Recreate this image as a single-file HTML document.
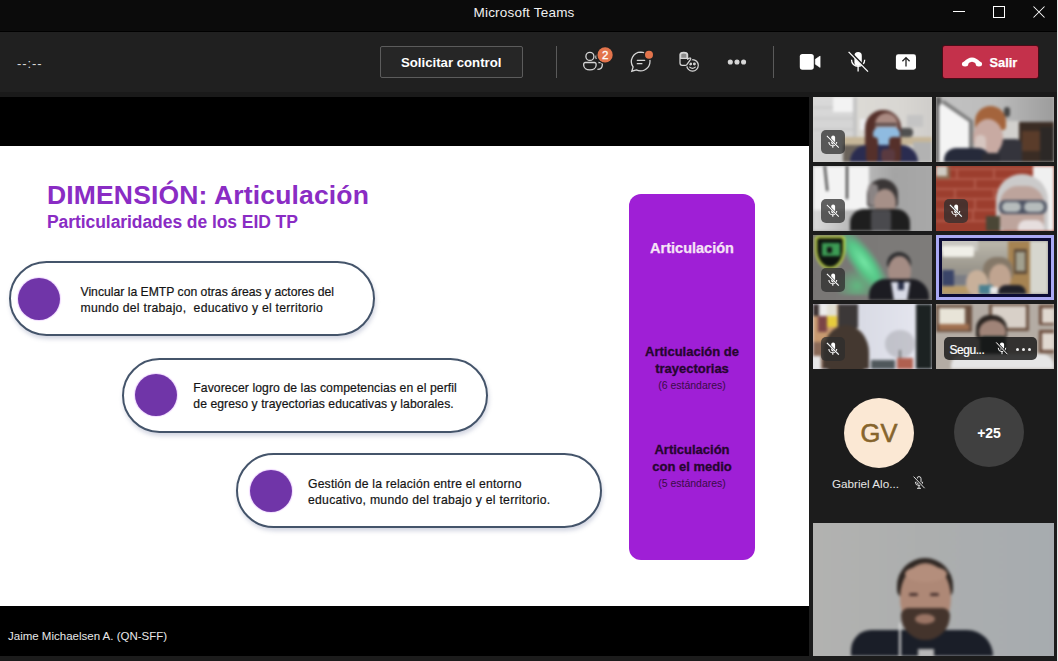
<!DOCTYPE html>
<html><head><meta charset="utf-8">
<style>
*{margin:0;padding:0;box-sizing:border-box}
html,body{width:1058px;height:661px;overflow:hidden;background:#0b0b0b;font-family:"Liberation Sans",sans-serif}
.a{position:absolute}
.t{position:absolute;white-space:nowrap;line-height:1}
#title{left:0;top:0;width:1058px;height:31px;background:#0b0b0b}
#tb{left:0;top:32px;width:1057px;height:60px;background:#202020}
#tb2{left:0;top:92px;width:1057px;height:5px;background:#1a1a1a}
#stage{left:0;top:97px;width:809px;height:559px;background:#000}
#slide{left:0;top:146px;width:809px;height:460px;background:#fff;overflow:hidden}
#panel{left:809px;top:97px;width:248px;height:559px;background:#1c1c1c}
#bot{left:0;top:656px;width:1058px;height:5px;background:#1c1c1c}
#rb{left:1057px;top:0;width:1px;height:661px;background:#e8e8e8}
.pill{position:absolute;width:366px;height:75px;border:2px solid #44546a;border-radius:38px;background:#fff;box-shadow:1px 3px 4px rgba(80,90,140,.25)}
.dot{position:absolute;width:42px;height:42px;border-radius:50%;background:#7035a8;box-shadow:0 0 1px 1px #f0d8ff}
.ptx{position:absolute;font-size:12.2px;line-height:16px;color:#141414;white-space:nowrap;-webkit-text-stroke:0.2px #141414}
.tile{position:absolute;overflow:hidden;background:#777}
.mute{position:absolute;width:24px;height:24px;border-radius:5px;background:rgba(40,40,40,.75)}
.v{position:absolute;left:-4px;top:-4px;right:-4px;bottom:-4px;filter:blur(1.6px)}
.v>div{position:absolute}
.mute svg{position:absolute;left:0;top:0}
</style></head><body>
<div class="a" id="title"></div>
<div class="t" style="left:473.5px;top:5.6px;font-size:13.5px;letter-spacing:0.2px;color:#f0f0f0">Microsoft Teams</div>
<div class="a" style="left:953px;top:11px;width:12px;height:1px;background:#fff"></div>
<div class="a" style="left:993px;top:6px;width:12px;height:12px;border:1px solid #fff"></div>
<svg class="a" style="left:1032px;top:5px" width="14" height="14"><path d="M1.5 1.5L12.5 12.5M12.5 1.5L1.5 12.5" stroke="#fff" stroke-width="1.05"/></svg>

<div class="a" id="tb"></div>
<div class="a" id="tb2"></div>
<div class="a" style="left:0;top:31px;width:1057px;height:1px;background:#000"></div><div class="t" style="left:17px;top:56.5px;font-size:13px;letter-spacing:0.9px;color:#d8d8d8">--:--</div>
<div class="a" style="left:380px;top:46px;width:143px;height:32px;border:1px solid #5c5c5c;border-radius:2px;background:#262626"></div>
<div class="t" style="left:401px;top:56px;font-size:13.2px;font-weight:700;color:#fff">Solicitar control</div>
<div class="a" style="left:556px;top:46px;width:1px;height:32px;background:#5a5a5a"></div>
<div class="a" style="left:773px;top:46px;width:1px;height:32px;background:#5a5a5a"></div>
<div class="a" style="left:943px;top:46px;width:95px;height:32px;border-radius:2px;background:#c4314b;box-shadow:0 0 0 1px #4a0c18"></div>
<div class="t" style="left:989.5px;top:57px;font-size:12.8px;font-weight:700;color:#fff;-webkit-text-stroke:0.25px #fff">Salir</div>

<svg class="a" style="left:570px;top:40px" width="200" height="44" viewBox="570 40 200 44">
<g fill="none" stroke="#d6d6d6" stroke-width="1.3">
<circle cx="589.9" cy="56.4" r="4"/>
<path d="M585.3 62.5h9.2a1.6 1.6 0 0 1 1.6 1.6v1.2c0 2.8-2.9 4.6-6.2 4.6s-6.2-1.8-6.2-4.6v-1.2a1.6 1.6 0 0 1 1.6-1.6z"/>
<path d="M598.4 62.5h2.3a1.6 1.6 0 0 1 1.6 1.6v1c0 2.4-1.9 4.3-4.9 4.3"/>
<path d="M596.4 58.9a2.8 2.8 0 0 1 1.6-4.4"/>
</g>
<circle cx="605.1" cy="54.9" r="9" fill="#202020"/>
<circle cx="605.1" cy="54.9" r="7.6" fill="#e3744c"/>
<text x="605.1" y="59" font-family="Liberation Sans" font-size="11.5" fill="#fff" text-anchor="middle" stroke="#fff" stroke-width="0.3">2</text>
<g fill="none" stroke="#d6d6d6" stroke-width="1.3">
<path d="M640.7 52.1a9.4 9.4 0 1 1-4.3 17.8l-4.6 1.3 1.3-4.3a9.4 9.4 0 0 1 7.6-14.8z"/>
<path d="M637.3 60.3h7.4M637.3 63.7h4.6" stroke-linecap="round"/>
</g>
<circle cx="649" cy="54.7" r="5.4" fill="#202020"/>
<circle cx="649" cy="54.7" r="4" fill="#e3744c"/>
<g fill="none" stroke="#d6d6d6" stroke-width="1.3" stroke-linejoin="round">
<g fill="none" stroke="#d6d6d6" stroke-width="1.25">
<circle cx="692.5" cy="65.3" r="5.8"/>
<path d="M689.7 67.1Q692.5 69.5 695.3 67.1" stroke-linecap="round"/>
</g>
<circle cx="690.6" cy="64" r="0.8" fill="#d6d6d6"/><circle cx="694.4" cy="64" r="0.8" fill="#d6d6d6"/>
<path d="M682.2 65.4C680.8 65.4 680 64.4 680 63V54.6C680 52.9 681.6 52.3 683.8 52.3C686 52.3 687.6 52.9 687.6 54.6V59.3L689 58.3C689.9 57.7 691.2 58.2 690.6 59.3L686.8 64.6C686.4 65.1 685.8 65.4 685.1 65.4Z" fill="#202020" stroke="#202020" stroke-width="3.2" stroke-linejoin="round"/>
<path d="M680.6 58.4V54.6C680.6 53.3 682 52.9 683.8 52.9C685.6 52.9 687 53.3 687 54.6V58.4Z" fill="#8e8e8e"/>
<path d="M682.2 65.4C680.8 65.4 680 64.4 680 63V54.6C680 52.9 681.6 52.3 683.8 52.3C686 52.3 687.6 52.9 687.6 54.6V59.3L689 58.3C689.9 57.7 691.2 58.2 690.6 59.3L686.8 64.6C686.4 65.1 685.8 65.4 685.1 65.4Z" fill="none" stroke="#d6d6d6" stroke-width="1.25" stroke-linejoin="round"/>
<circle cx="730.3" cy="62" r="1.9" fill="#dadada"/>
<circle cx="737" cy="62" r="1.9" fill="#dadada"/>
<circle cx="743.6" cy="62" r="1.9" fill="#dadada"/>
</svg>
<svg class="a" style="left:790px;top:40px" width="210" height="44" viewBox="790 40 210 44">
<rect x="799.8" y="53.9" width="14" height="15.8" rx="2.6" fill="#fff"/>
<path d="M815.3 59.3l4.8-3.2v11.3l-4.8-3.2z" fill="#fff" stroke="#fff" stroke-width="0.6" stroke-linejoin="round"/>
<rect x="854.4" y="52" width="7.4" height="13.9" rx="3.7" fill="#fff"/>
<path d="M851.5 59.8a6.6 6.6 0 0 0 13.2 0" fill="none" stroke="#fff" stroke-width="1.3"/>
<path d="M858.1 66.5v5" stroke="#fff" stroke-width="1.3"/>
<path d="M849.6 51.5l19.4 19.7" stroke="#202020" stroke-width="2.2"/>
<path d="M848.6 51.9l19.4 19.7" stroke="#fff" stroke-width="1.3"/>
<rect x="895.9" y="54.3" width="20.1" height="15.4" rx="2.4" fill="#fff"/>
<path d="M906 66.6v-8.8M902.4 61.2l3.6-3.6 3.6 3.6" fill="none" stroke="#222" stroke-width="1.3"/>
<path d="M965.4 63.4Q972 55.8 978.6 63.4" fill="none" stroke="#fff" stroke-width="4.4" stroke-linecap="round"/><ellipse cx="965.1" cy="63.9" rx="3.2" ry="2.5" fill="#fff"/><ellipse cx="978.9" cy="63.9" rx="3.2" ry="2.5" fill="#fff"/>
</svg>
<div class="a" id="stage"></div>
<div class="a" id="slide">
<div class="t" style="left:47px;top:36.4px;font-size:26.5px;letter-spacing:0.15px;font-weight:700;color:#8a2cc4">DIMENSIÓN: Articulación</div>
<div class="t" style="left:47px;top:68.1px;font-size:17.5px;letter-spacing:-0.07px;font-weight:700;color:#8a2cc4">Particularidades de los EID TP</div>
<div class="pill" style="left:9px;top:115px"></div>
<div class="pill" style="left:122px;top:211.5px"></div>
<div class="pill" style="left:236px;top:307px"></div>
<div class="dot" style="left:18px;top:132px"></div>
<div class="dot" style="left:135px;top:227.7px"></div>
<div class="dot" style="left:250px;top:324.2px"></div>
<div class="ptx" style="left:80.5px;top:137.5px;letter-spacing:0px">Vincular la EMTP con otras áreas y actores del</div>
<div class="ptx" style="left:80.5px;top:153.7px;letter-spacing:0.27px">mundo del trabajo,&nbsp; educativo y el territorio</div>
<div class="ptx" style="left:193.3px;top:234.0px;letter-spacing:0.085px">Favorecer logro de las competencias en el perfil</div>
<div class="ptx" style="left:193.3px;top:250.2px;letter-spacing:0.064px">de egreso y trayectorias educativas y laborales.</div>
<div class="ptx" style="left:308px;top:329.7px;letter-spacing:0.18px">Gestión de la relación entre el entorno</div>
<div class="ptx" style="left:308px;top:345.9px;letter-spacing:0.27px">educativo, mundo del trabajo y el territorio.</div>
<div class="a" style="left:629px;top:48px;width:126px;height:366px;border-radius:12px;background:#9f1fd6"></div>
<div class="t" style="left:629px;width:126px;text-align:center;top:94.5px;font-size:14.5px;font-weight:700;color:#f6e4f6;-webkit-text-stroke:0.25px #f6e4f6">Articulación</div>
<div class="t" style="left:629px;width:126px;text-align:center;top:198px;font-size:13px;font-weight:700;color:#26062f;line-height:16.8px;-webkit-text-stroke:0.3px #26062f">Articulación de<br>trayectorias</div>
<div class="t" style="left:629px;width:126px;text-align:center;top:234px;font-size:10.5px;color:#3a0c48">(6 estándares)</div>
<div class="t" style="left:629px;width:126px;text-align:center;top:294.8px;font-size:13px;font-weight:700;color:#26062f;line-height:17.6px;-webkit-text-stroke:0.3px #26062f">Articulación<br>con el medio</div>
<div class="t" style="left:629px;width:126px;text-align:center;top:331.6px;font-size:10.5px;color:#3a0c48">(5 estándares)</div>
</div>
<div class="t" style="left:8px;top:631px;font-size:11.5px;color:#e8e8e8">Jaime Michaelsen A. (QN-SFF)</div>

<div class="a" id="panel"></div>
<div class="tile" style="left:813px;top:97px;width:119px;height:65px"><div class="v"><div style="left:0px;top:0px;width:127px;height:73px;background:#d6d4cf"></div><div style="left:4px;top:4px;width:41px;height:65px;background:linear-gradient(180deg,#d9d9d9,#cfcfcf)"></div><div style="left:4px;top:14px;width:41px;height:1px;background:#bdbdbd"></div><div style="left:4px;top:25px;width:41px;height:1px;background:#bdbdbd"></div><div style="left:4px;top:36px;width:41px;height:1px;background:#bdbdbd"></div><div style="left:24px;top:4px;width:20px;height:15px;background:#f3f3f3"></div><div style="left:44px;top:4px;width:4px;height:65px;background:#c4c4c4"></div><div style="left:48px;top:4px;width:75px;height:42px;background:linear-gradient(90deg,#dcdad5,#d8d6d2 60%,#cfcdca)"></div><div style="left:51px;top:26px;width:12px;height:11px;background:#ebebef"></div><div style="left:98px;top:22px;width:16px;height:12px;background:#c4c4c4"></div><div style="left:34px;top:44px;width:89px;height:8px;background:#c6b698"></div><div style="left:34px;top:52px;width:28px;height:17px;background:#6a625a"></div><div style="left:90px;top:35px;width:14px;height:9px;background:#505050;border-radius:4px"></div><div style="left:104px;top:49px;width:19px;height:20px;background:#b2b2b2"></div><div style="left:56px;top:17px;width:36px;height:52px;background:#55302a;border-radius:18px 18px 6px 6px"></div><div style="left:66px;top:20px;width:23px;height:24px;background:#aa8a82;border-radius:50%;"></div><div style="left:66px;top:30px;width:22px;height:3px;background:#5a4a48"></div><div style="left:64px;top:34px;width:27px;height:20px;background:#8fbbe0;border-radius:7px 7px 14px 14px"></div><div style="left:41px;top:52px;width:68px;height:17px;background:#2a2c50;border-radius:18px 18px 0 0"></div><div style="left:57px;top:44px;width:12px;height:25px;background:#55302a;border-radius:4px"></div><div style="left:80px;top:44px;width:12px;height:25px;background:#55302a;border-radius:4px"></div><div style="left:72px;top:56px;width:14px;height:13px;background:#5a3a40;border-radius:4px"></div></div><div class="mute" style="left:8px;top:33px;background:rgba(44,44,44,.74)"><svg width="24" height="24" viewBox="0 0 24 24"><rect x="10.2" y="5.5" width="3.9" height="8.9" rx="1.95" fill="#fff"/><path d="M7.9 11.9a3.9 3.9 0 0 0 7.8 0" fill="none" stroke="#fff" stroke-width="1.1"/><path d="M11.8 15.8v1.9" stroke="#fff" stroke-width="1.1"/><path d="M6.3 5.9l11.6 11.8" stroke="#444" stroke-width="2"/><path d="M5.9 5.9l11.9 11.8" stroke="#fff" stroke-width="1.1"/></svg></div></div><div class="tile" style="left:936px;top:97px;width:118px;height:65px"><div class="v"><div style="left:0px;top:0px;width:126px;height:73px;background:#b8b6b2"></div><div style="left:4px;top:4px;width:118px;height:26px;background:linear-gradient(90deg,#c2c2c2,#bcbcbc 50%,#9c9c9c)"></div><div style="left:66px;top:28px;width:22px;height:30px;background:#d2d0cd"></div><div style="left:4px;top:4px;width:5px;height:65px;background:#5a5a5a"></div><div style="left:7px;top:7px;width:34px;height:62px;background:#7c7c7c;clip-path:polygon(0 8%,14% 0,100% 33%,100% 100%,0 100%)"></div><div style="left:7px;top:10px;width:30px;height:59px;background:#f4f4f4;clip-path:polygon(0 6%,8% 0,100% 32%,100% 100%,0 100%)"></div><div style="left:87px;top:29px;width:35px;height:40px;background:#3a2c24"></div><div style="left:90px;top:38px;width:18px;height:20px;background:#5a3c2a"></div><div style="left:108px;top:34px;width:14px;height:35px;background:#2c2826"></div><div style="left:66px;top:46px;width:24px;height:23px;background:#34343c;border-radius:6px 6px 0 0"></div><div style="left:72px;top:14px;width:6px;height:10px;background:#454545;border-radius:3px"></div><div style="left:43px;top:13px;width:31px;height:24px;background:#a4643c;border-radius:16px 16px 4px 4px"></div><div style="left:41px;top:26px;width:30px;height:37px;background:#c8aaa2;border-radius:50%;"></div><div style="left:43px;top:42px;width:11px;height:20px;background:#d6c6c0;border-radius:5px"></div><div style="left:12px;top:55px;width:46px;height:14px;background:#262a3a;border-radius:12px 12px 0 0"></div><div style="left:50px;top:60px;width:18px;height:9px;background:#2c2c34"></div></div></div><div class="tile" style="left:813px;top:166px;width:119px;height:65px"><div class="v"><div style="left:0px;top:0px;width:127px;height:73px;background:#a9a9a9"></div><div style="left:60px;top:4px;width:63px;height:65px;background:linear-gradient(90deg,#b6b6b6,#a4a4a4 40%,#a8a8a8)"></div><div style="left:4px;top:4px;width:56px;height:44px;background:#f3f3f3"></div><div style="left:4px;top:48px;width:56px;height:21px;background:linear-gradient(90deg,#dadada,#a8a8a8)"></div><div style="left:16px;top:4px;width:2px;height:25px;background:#2a2a2a;transform:skewX(6deg)"></div><div style="left:37px;top:4px;width:2px;height:33px;background:#2a2a2a"></div><div style="left:58px;top:17px;width:31px;height:28px;background:#3a3636;border-radius:16px 16px 4px 4px"></div><div style="left:59px;top:22px;width:10px;height:22px;background:#8a8484;border-radius:4px"></div><div style="left:65px;top:27px;width:22px;height:27px;background:#a69088;border-radius:50%;"></div><div style="left:41px;top:47px;width:60px;height:22px;background:#1e1e1e;border-radius:14px 14px 0 0"></div><div style="left:62px;top:48px;width:20px;height:21px;background:#4a4a4e;border-radius:3px"></div></div><div class="mute" style="left:8px;top:33px;background:rgba(44,44,44,.74)"><svg width="24" height="24" viewBox="0 0 24 24"><rect x="10.2" y="5.5" width="3.9" height="8.9" rx="1.95" fill="#fff"/><path d="M7.9 11.9a3.9 3.9 0 0 0 7.8 0" fill="none" stroke="#fff" stroke-width="1.1"/><path d="M11.8 15.8v1.9" stroke="#fff" stroke-width="1.1"/><path d="M6.3 5.9l11.6 11.8" stroke="#444" stroke-width="2"/><path d="M5.9 5.9l11.9 11.8" stroke="#fff" stroke-width="1.1"/></svg></div></div><div class="tile" style="left:936px;top:166px;width:118px;height:65px"><div class="v"><div style="left:0px;top:0px;width:126px;height:73px;background:#9c3e2e"></div><div style="left:4px;top:6px;width:100px;height:1.5px;background:#b25a4a"></div><div style="left:4px;top:16px;width:100px;height:1.5px;background:#b25a4a"></div><div style="left:4px;top:26px;width:100px;height:1.5px;background:#b25a4a"></div><div style="left:4px;top:36px;width:100px;height:1.5px;background:#b25a4a"></div><div style="left:4px;top:47px;width:100px;height:1.5px;background:#b25a4a"></div><div style="left:4px;top:58px;width:100px;height:1.5px;background:#b25a4a"></div><div style="left:24px;top:6px;width:1.5px;height:10px;background:#b25a4a"></div><div style="left:61px;top:6px;width:1.5px;height:10px;background:#b25a4a"></div><div style="left:42px;top:16px;width:1.5px;height:10px;background:#b25a4a"></div><div style="left:22px;top:26px;width:1.5px;height:10px;background:#b25a4a"></div><div style="left:61px;top:26px;width:1.5px;height:10px;background:#b25a4a"></div><div style="left:42px;top:36px;width:1.5px;height:11px;background:#b25a4a"></div><div style="left:40px;top:47px;width:1.5px;height:11px;background:#b25a4a"></div><div style="left:4px;top:4px;width:14px;height:13px;background:#8a6a50"></div><div style="left:4px;top:4px;width:11px;height:10px;background:#d0ccc4"></div><div style="left:101px;top:4px;width:21px;height:65px;background:#f0f0f0"></div><div style="left:64px;top:12px;width:52px;height:57px;background:#cbcaca;border-radius:26px 26px 0 0"></div><div style="left:68px;top:24px;width:44px;height:45px;background:#bda49c;border-radius:18px 18px 6px 6px"></div><div style="left:67px;top:38px;width:48px;height:14px;background:#4c5262;border-radius:6px"></div><div style="left:70px;top:40px;width:19px;height:10px;background:#b6bcbc;border-radius:5px"></div><div style="left:92px;top:40px;width:20px;height:10px;background:#b6bcbc;border-radius:5px"></div><div style="left:86px;top:58px;width:26px;height:11px;background:#e6dede;border-radius:8px 8px 0 0"></div><div style="left:54px;top:54px;width:14px;height:15px;background:#4a4636"></div></div><div class="mute" style="left:8px;top:33px;background:rgba(44,44,44,.74)"><svg width="24" height="24" viewBox="0 0 24 24"><rect x="10.2" y="5.5" width="3.9" height="8.9" rx="1.95" fill="#fff"/><path d="M7.9 11.9a3.9 3.9 0 0 0 7.8 0" fill="none" stroke="#fff" stroke-width="1.1"/><path d="M11.8 15.8v1.9" stroke="#fff" stroke-width="1.1"/><path d="M6.3 5.9l11.6 11.8" stroke="#444" stroke-width="2"/><path d="M5.9 5.9l11.9 11.8" stroke="#fff" stroke-width="1.1"/></svg></div></div><div class="tile" style="left:813px;top:235px;width:119px;height:65px"><div class="v"><div style="left:0px;top:0px;width:127px;height:73px;background:linear-gradient(90deg,#787674,#7e7c7a)"></div><div style="left:44px;top:-4px;width:26px;height:76px;background:radial-gradient(ellipse at 50% 45%,#74e6a4 0%,#56c888 35%,rgba(120,118,116,0) 72%);transform:rotate(-36deg)"></div><div style="left:24px;top:34px;width:40px;height:30px;background:radial-gradient(ellipse at 60% 70%,rgba(90,200,130,.8) 0%,rgba(120,118,116,0) 65%)"></div><div style="left:6px;top:5px;width:30px;height:33px;background:#c8e040;border-radius:3px 3px 15px 15px / 3px 3px 20px 20px"></div><div style="left:8px;top:7px;width:26px;height:29px;background:#0e1410;border-radius:2px 2px 13px 13px / 2px 2px 18px 18px"></div><div style="left:13px;top:12px;width:18px;height:13px;background:#3c9c54"></div><div style="left:18px;top:16px;width:5px;height:6px;background:#111"></div><div style="left:78px;top:21px;width:24px;height:16px;background:#2c2c2e;border-radius:12px 12px 4px 4px"></div><div style="left:79px;top:25px;width:23px;height:30px;background:#a48c84;border-radius:50%;"></div><div style="left:60px;top:48px;width:60px;height:21px;background:#1c1c22;border-radius:16px 18px 0 0"></div><div style="left:82px;top:51px;width:19px;height:18px;background:#d8dae6;clip-path:polygon(0 0,100% 0,85% 100%,15% 100%)"></div><div style="left:89px;top:51px;width:6px;height:8px;background:#2a3048"></div></div><div class="mute" style="left:8px;top:33px;background:rgba(44,44,44,.74)"><svg width="24" height="24" viewBox="0 0 24 24"><rect x="10.2" y="5.5" width="3.9" height="8.9" rx="1.95" fill="#fff"/><path d="M7.9 11.9a3.9 3.9 0 0 0 7.8 0" fill="none" stroke="#fff" stroke-width="1.1"/><path d="M11.8 15.8v1.9" stroke="#fff" stroke-width="1.1"/><path d="M6.3 5.9l11.6 11.8" stroke="#444" stroke-width="2"/><path d="M5.9 5.9l11.9 11.8" stroke="#fff" stroke-width="1.1"/></svg></div></div><div class="a" style="left:936px;top:235px;width:118px;height:65px;background:#0c0c34;border:3px solid #aaa9f4"></div><div class="tile" style="left:942px;top:241px;width:106px;height:53px"><div class="v"><div style="left:0px;top:0px;width:114px;height:61px;background:#96938c"></div><div style="left:4px;top:4px;width:70px;height:28px;background:linear-gradient(180deg,#bcb8ac,#9a968c)"></div><div style="left:0px;top:0px;width:40px;height:14px;background:#c8c6c0"></div><div style="left:4px;top:9px;width:32px;height:11px;background:#f0efe8;border-radius:2px"></div><div style="left:4px;top:33px;width:12px;height:16px;background:#3a4468"></div><div style="left:16px;top:38px;width:20px;height:10px;background:#7a7c84"></div><div style="left:4px;top:49px;width:42px;height:8px;background:#b89a68"></div><div style="left:70px;top:4px;width:23px;height:53px;background:#a68352"></div><div style="left:76px;top:12px;width:13px;height:25px;background:#5c4a38"></div><div style="left:78px;top:15px;width:9px;height:19px;background:#a2a08e"></div><div style="left:92px;top:4px;width:18px;height:53px;background:#d6d6ce"></div><div style="left:45px;top:20px;width:30px;height:22px;background:#857868;border-radius:13px 13px 4px 4px"></div><div style="left:51px;top:27px;width:22px;height:28px;background:#c0a490;border-radius:50%;"></div><div style="left:28px;top:33px;width:22px;height:26px;background:#c8b09a;border-radius:50%;"></div><div style="left:41px;top:48px;width:14px;height:9px;background:#4a8090"></div><div style="left:52px;top:50px;width:8px;height:7px;background:#e8e8e8"></div><div style="left:60px;top:48px;width:28px;height:9px;background:#202028;border-radius:8px 8px 0 0"></div></div></div><div class="tile" style="left:813px;top:304px;width:119px;height:65px"><div class="v"><div style="left:0px;top:0px;width:127px;height:73px;background:#dcdde8"></div><div style="left:49px;top:4px;width:58px;height:65px;background:linear-gradient(90deg,#d8dae4,#e4e5ee)"></div><div style="left:4px;top:4px;width:25px;height:65px;background:#c89a70"></div><div style="left:4px;top:4px;width:6px;height:12px;background:#3a3030"></div><div style="left:10px;top:4px;width:8px;height:12px;background:#ececec"></div><div style="left:18px;top:4px;width:10px;height:12px;background:#e2e0d4"></div><div style="left:18px;top:16px;width:10px;height:11px;background:#e6cc3c"></div><div style="left:9px;top:16px;width:9px;height:16px;background:#7a4446"></div><div style="left:4px;top:42px;width:25px;height:27px;background:#8a6a58"></div><div style="left:4px;top:56px;width:8px;height:13px;background:#e8e8e8"></div><div style="left:29px;top:4px;width:20px;height:32px;background:#3c3838"></div><div style="left:45px;top:28px;width:6px;height:8px;background:#f2f2f2"></div><div style="left:107px;top:4px;width:16px;height:65px;background:#1c2222"></div><div style="left:14px;top:25px;width:46px;height:56px;background:#443830;border-radius:50%;"></div><div style="left:14px;top:54px;width:46px;height:15px;background:#443830"></div><div style="left:76px;top:30px;width:30px;height:28px;background:#8a8a90;border-radius:50%;opacity:.35"></div><div style="left:90px;top:50px;width:2px;height:8px;background:#777"></div><div style="left:88px;top:58px;width:16px;height:11px;background:#b06050"></div><div style="left:62px;top:60px;width:24px;height:9px;background:#50585c"></div></div><div class="mute" style="left:8px;top:33px;background:rgba(44,44,44,.74)"><svg width="24" height="24" viewBox="0 0 24 24"><rect x="10.2" y="5.5" width="3.9" height="8.9" rx="1.95" fill="#fff"/><path d="M7.9 11.9a3.9 3.9 0 0 0 7.8 0" fill="none" stroke="#fff" stroke-width="1.1"/><path d="M11.8 15.8v1.9" stroke="#fff" stroke-width="1.1"/><path d="M6.3 5.9l11.6 11.8" stroke="#444" stroke-width="2"/><path d="M5.9 5.9l11.9 11.8" stroke="#fff" stroke-width="1.1"/></svg></div></div><div class="tile" style="left:936px;top:304px;width:118px;height:65px"><div class="v"><div style="left:0px;top:0px;width:126px;height:73px;background:#b4aca4"></div><div style="left:4px;top:5px;width:36px;height:27px;background:#6a5040"></div><div style="left:7px;top:8px;width:26px;height:16px;background:#e8e4d8"></div><div style="left:7px;top:24px;width:30px;height:6px;background:#a07050"></div><div style="left:57px;top:4px;width:40px;height:27px;background:#6a5040"></div><div style="left:60px;top:6px;width:34px;height:22px;background:#d8d0c8"></div><div style="left:107px;top:5px;width:15px;height:20px;background:#6a4a3a"></div><div style="left:110px;top:8px;width:12px;height:15px;background:#e0d8d0"></div><div style="left:107px;top:30px;width:15px;height:23px;background:#6a4a3a"></div><div style="left:110px;top:33px;width:12px;height:17px;background:#e0d8d0"></div><div style="left:44px;top:15px;width:31px;height:24px;background:#2a2420;border-radius:14px 14px 4px 4px"></div><div style="left:47px;top:20px;width:27px;height:24px;background:#a08478;border-radius:50%;"></div><div style="left:48px;top:36px;width:26px;height:23px;background:#1e2a28;border-radius:4px 4px 10px 10px"></div><div style="left:19px;top:54px;width:103px;height:15px;background:#e6e6e6;border-radius:12px 12px 0 0"></div></div><div class="a" style="left:8px;top:33px;width:93px;height:23px;border-radius:5px;background:rgba(22,22,22,.82)"></div><div class="t" style="left:13.5px;top:39.8px;font-size:12px;letter-spacing:-0.45px;color:#fff;-webkit-text-stroke:0.2px #fff">Segu...</div><svg class="a" style="left:58px;top:37px" width="16" height="16" viewBox="4 4 16 16"><rect x="9.9" y="5.5" width="4.2" height="7.6" rx="2.1" fill="#fff"/><path d="M8.2 10.8a3.8 3.8 0 0 0 7.6 0" fill="none" stroke="#fff" stroke-width="1"/><path d="M12 14.6v2.6" stroke="#fff" stroke-width="1"/><path d="M6.4 5.6l11 11.6" stroke="#222" stroke-width="2.4"/><path d="M6.2 5.4l11.2 11.8" stroke="#fff" stroke-width="1"/></svg><div class="a" style="left:80px;top:44px;width:3px;height:3px;border-radius:50%;background:#eee"></div><div class="a" style="left:86px;top:44px;width:3px;height:3px;border-radius:50%;background:#eee"></div><div class="a" style="left:92px;top:44px;width:3px;height:3px;border-radius:50%;background:#eee"></div></div><div class="a" style="left:844px;top:398px;width:70px;height:70px;border-radius:50%;background:#fbe8d4"></div><div class="t" style="left:844px;width:70px;text-align:center;top:421px;font-size:25.5px;color:#86642c;-webkit-text-stroke:0.6px #86642c">GV</div><div class="a" style="left:954px;top:397px;width:70px;height:70px;border-radius:50%;background:#404040"></div><div class="t" style="left:954px;width:70px;text-align:center;top:426px;font-size:14px;font-weight:700;color:#fff">+25</div><div class="t" style="left:832px;top:477.5px;font-size:11.7px;color:#e6e6e6">Gabriel Alo...</div><svg class="a" style="left:911px;top:475px" width="16" height="16" viewBox="4 4 16 16"><rect x="10" y="5.6" width="4" height="7.4" rx="2" fill="none" stroke="#e0e0e0" stroke-width="1"/><path d="M8.3 10.8a3.7 3.7 0 0 0 7.4 0" fill="none" stroke="#e0e0e0" stroke-width="1"/><path d="M12 14.5v2.8M10 17.3h4" stroke="#e0e0e0" stroke-width="1"/><path d="M6.8 5.8l10.8 11.4" stroke="#1c1c1c" stroke-width="2.4"/><path d="M6.6 5.6l11 11.6" stroke="#e0e0e0" stroke-width="1"/></svg><div class="tile" style="left:813px;top:523px;width:241px;height:133px"><div class="v"><div style="left:0px;top:0px;width:249px;height:141px;background:linear-gradient(90deg,#b2b2b0 0%,#acaeae 45%,#a6abaf 100%)"></div><div style="left:42px;top:111px;width:142px;height:26px;background:#1a1e28;border-radius:28px 36px 0 0"></div><div style="left:88px;top:39px;width:56px;height:40px;background:#2e2622;border-radius:28px 28px 8px 8px"></div><div style="left:91px;top:44px;width:51px;height:70px;background:#ae8876;border-radius:50%;"></div><div style="left:96px;top:47px;width:42px;height:16px;background:#b48e7c;border-radius:50%"></div><div style="left:100px;top:74px;width:9px;height:3px;background:#4a3430;border-radius:2px"></div><div style="left:121px;top:74px;width:9px;height:3px;background:#4a3430;border-radius:2px"></div><div style="left:92px;top:89px;width:49px;height:32px;background:#44342c;border-radius:8px 8px 26px 26px"></div><div style="left:106px;top:95px;width:20px;height:10px;background:#9a7464;border-radius:50%"></div><div style="left:90px;top:104px;width:2px;height:33px;background:#d8d8d8"></div><div style="left:109px;top:130px;width:16px;height:7px;background:#b8b8b8"></div></div></div>
<div class="a" id="bot"></div>
<div class="a" id="rb"></div>
</body></html>
